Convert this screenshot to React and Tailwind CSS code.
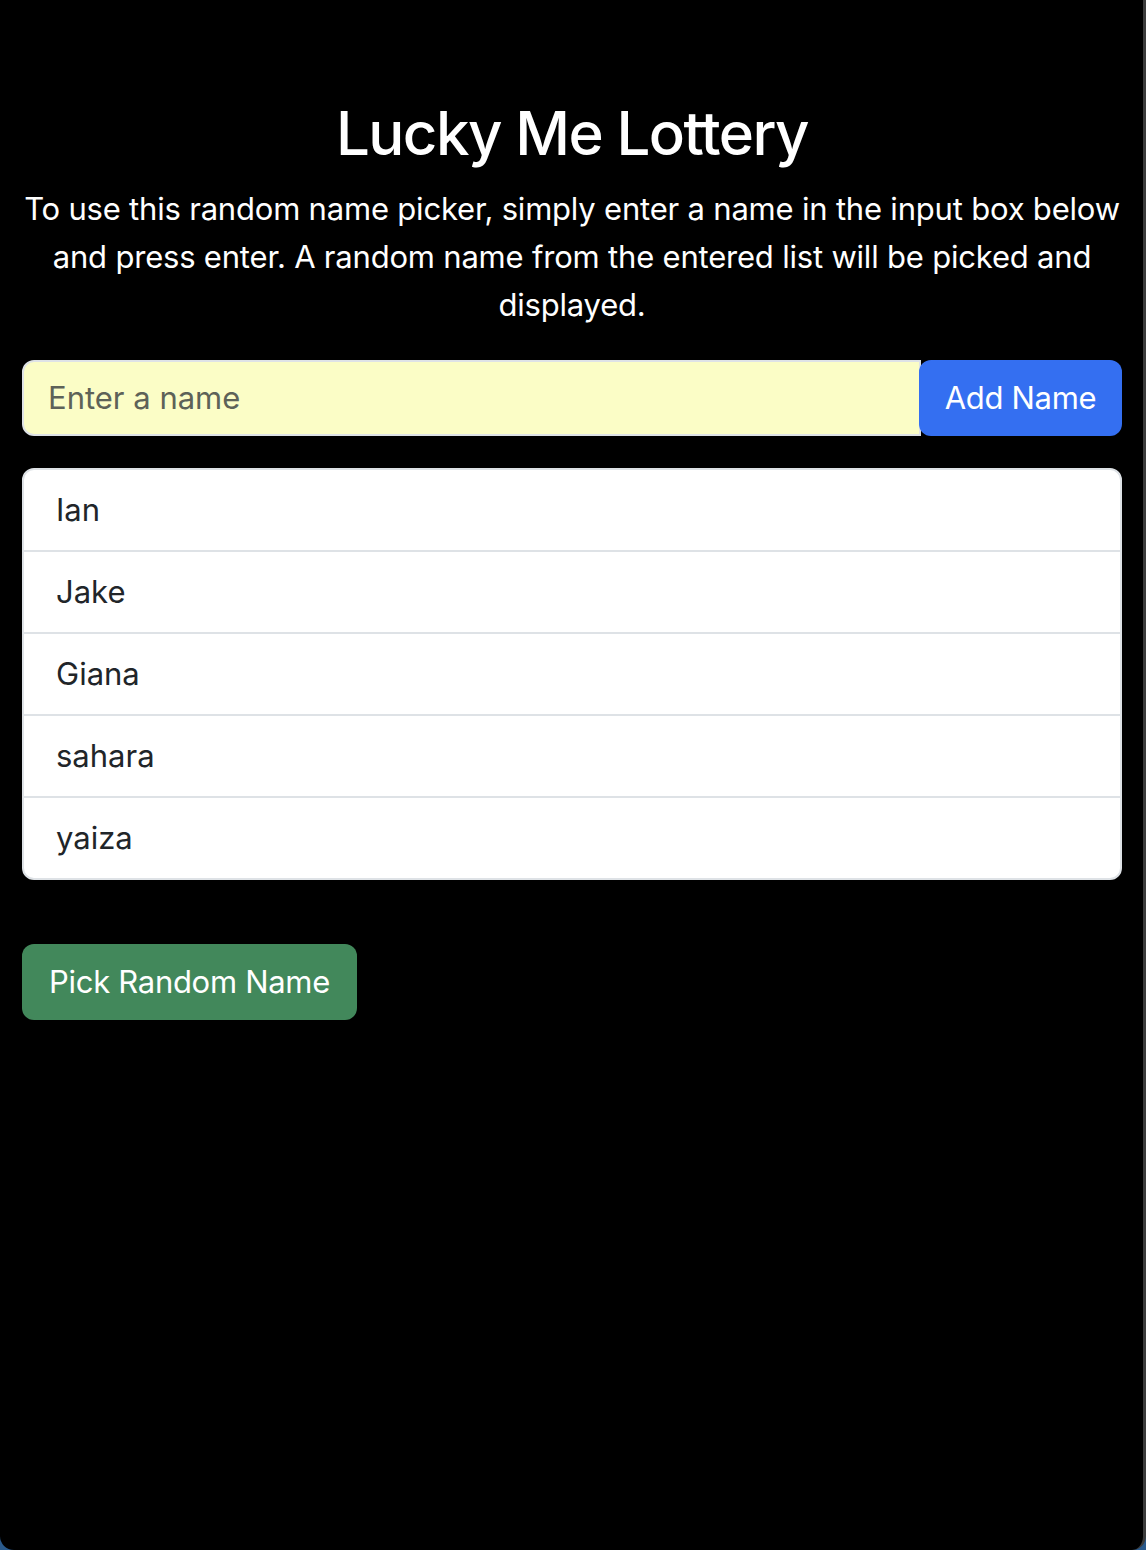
import React, { useState } from 'react';

const App = () => {
    const [names, setNames] = useState(['Ian', 'Jake', 'Giana', 'sahara', 'yaiza']);
    const [value, setValue] = useState('');

    const addName = () => {
        if (!value.trim()) return;
        setNames([...names, value.trim()]);
        setValue('');
    };

    return (
        <div className="h-[1550px] w-[1146px] bg-[#2a5a8c]" style={{ fontFamily: 'Inter, "Noto Sans", sans-serif' }}>
            <div className="h-full w-full bg-black rounded-b-[14px] border-r-[3px] border-[#3c3c3c] overflow-hidden">
                <div className="pl-[22px] pr-[21px] pt-[97px]">
                    {/* Header */}
                    <h1 className="text-center text-white text-[60px] leading-[1.2] font-medium tracking-[-1.6px] mb-4">
                        Lucky Me Lottery
                    </h1>
                    <p className="text-center text-white text-[31px] leading-[48px] tracking-[-0.2px] mb-[31px]">
                        To use this random name picker, simply enter a name in the input box below and press enter. A random name from the entered list will be picked and displayed.
                    </p>

                    {/* Input group */}
                    <div className="flex h-[76px]">
                        <input
                            type="text"
                            value={value}
                            onChange={(e) => setValue(e.target.value)}
                            onKeyDown={(e) => e.key === 'Enter' && addName()}
                            placeholder="Enter a name"
                            className="flex-1 min-w-0 bg-[#fbfdc6] border-2 border-[#dee2e6] rounded-l-[12px] px-6 text-[31px] text-[#212529] placeholder:text-[#5d6258] outline-none"
                        />
                        <button
                            onClick={addName}
                            className="w-[203px] -ml-[2px] bg-[#346ff1] text-white text-[31px] rounded-[12px] tracking-[-0.3px]"
                        >
                            Add Name
                        </button>
                    </div>

                    {/* Names list */}
                    <ul className="mt-8 bg-white border-2 border-[#dee2e6] rounded-[12px]">
                        {names.map((name, i) => (
                            <li
                                key={i}
                                className={`h-[80px] flex items-center px-8 text-[31px] text-[#212529] ${i > 0 ? 'border-t-2 border-[#dee2e6] h-[82px]' : ''}`}
                            >
                                {name}
                            </li>
                        ))}
                    </ul>

                    <button className="mt-16 h-[76px] w-[335px] bg-[#42885b] text-white text-[31px] rounded-[12px] tracking-[-0.3px]">
                        Pick Random Name
                    </button>
                </div>
            </div>
        </div>
    );
};

export default App;
